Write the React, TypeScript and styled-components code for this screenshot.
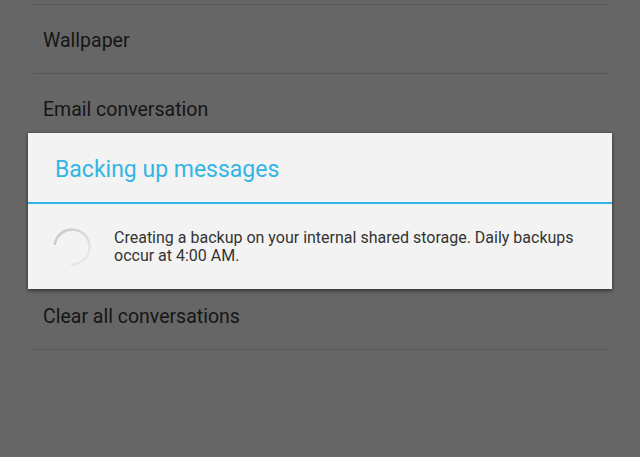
import React from "react";
import styled, { createGlobalStyle } from "styled-components";

const Global = createGlobalStyle`
  html, body {
    margin: 0;
    padding: 0;
    background: #666666;
    font-family: Roboto, "Noto Sans", "Liberation Sans", sans-serif;
  }
  #root { width: 640px; height: 457px; }
`;

const Screen = styled.div`
  position: relative;
  width: 640px;
  height: 457px;
  overflow: hidden;
  background: #666666;
`;

const List = styled.div`
  display: flex;
  flex-direction: column;
  padding: 4px 32px 0 33px;
`;

const Row = styled.div`
  box-sizing: border-box;
  display: flex;
  align-items: center;
  height: 69px;
  border-top: 1px solid #585858;
  padding: 2px 0 0 10px;
  font-size: 19.5px;
  color: #151515;
`;

const EndLine = styled.div`
  border-top: 1px solid #585858;
`;

const Dialog = styled.div`
  position: absolute;
  left: 28px;
  top: 133px;
  width: 584px;
  height: 156px;
  background: #f3f3f3;
  box-shadow: 0 2px 4px rgba(0, 0, 0, 0.45), 0 0 2px rgba(0, 0, 0, 0.3);
  display: flex;
  flex-direction: column;
`;

const Title = styled.div`
  box-sizing: border-box;
  height: 71px;
  display: flex;
  align-items: center;
  padding: 4px 0 0 27px;
  font-size: 23px;
  color: #33b5e5;
  border-bottom: 2px solid #33b5e5;
`;

const Body = styled.div`
  flex: 1;
  display: flex;
  align-items: center;
  padding-left: 25px;
  gap: 23px;
`;

const Message = styled.div`
  font-size: 16px;
  line-height: 18px;
  color: #333333;
  width: 460px;
  padding-top: 1px;
`;

const Spinner = () => (
  <svg width="38" height="38" viewBox="0 0 38 38">
    <defs>
      <linearGradient id="sg" x1="0" y1="0" x2="1" y2="1">
        <stop offset="0" stopColor="#c4c4c4" />
        <stop offset="1" stopColor="#ededed" />
      </linearGradient>
    </defs>
    <path
      d="M 1.8 16 A 17.5 17.5 0 1 1 19 36.5"
      fill="none"
      stroke="url(#sg)"
      strokeWidth="2.4"
      strokeLinecap="round"
    />
  </svg>
);

export default function App() {
  return (
    <Screen>
      <Global />
      <List>
        <Row>Wallpaper</Row>
        <Row>Email conversation</Row>
        <Row />
        <Row />
        <Row>Clear all conversations</Row>
        <EndLine />
      </List>
      <Dialog>
        <Title>Backing up messages</Title>
        <Body>
          <Spinner />
          <Message>
            Creating a backup on your internal shared storage. Daily backups occur at 4:00 AM.
          </Message>
        </Body>
      </Dialog>
    </Screen>
  );
}
